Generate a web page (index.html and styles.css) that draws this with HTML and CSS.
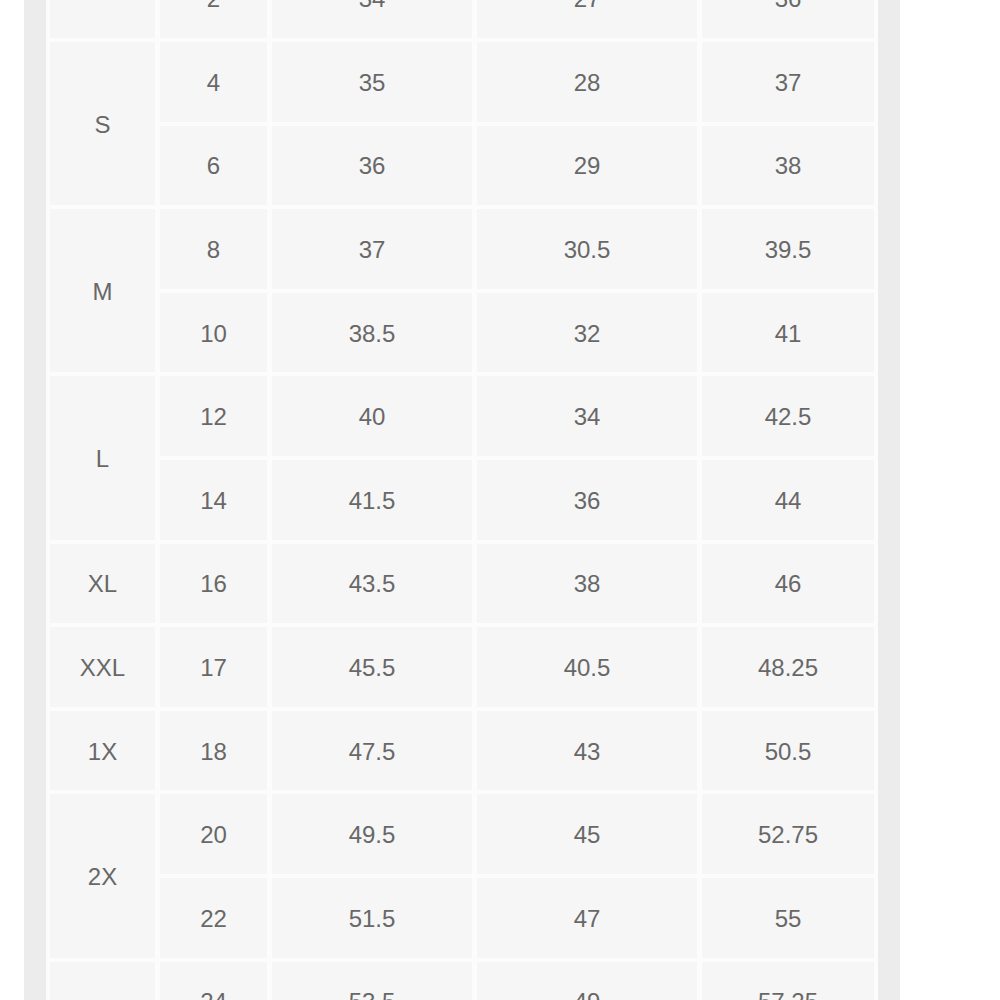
FILE: index.html
```html
<!DOCTYPE html>
<html>
<head>
<meta charset="utf-8">
<link rel="stylesheet" href="styles.css">
</head>
<body>
<div class="panel">
  <div class="inner">
    <div class="chart">
      <div class="cell"></div><div class="cell">2</div><div class="cell">34</div><div class="cell">27</div><div class="cell">36</div>

      <div class="cell span2">S</div>
      <div class="cell">4</div><div class="cell">35</div><div class="cell">28</div><div class="cell">37</div>
      <div class="cell">6</div><div class="cell">36</div><div class="cell">29</div><div class="cell">38</div>

      <div class="cell span2">M</div>
      <div class="cell">8</div><div class="cell">37</div><div class="cell">30.5</div><div class="cell">39.5</div>
      <div class="cell">10</div><div class="cell">38.5</div><div class="cell">32</div><div class="cell">41</div>

      <div class="cell span2">L</div>
      <div class="cell">12</div><div class="cell">40</div><div class="cell">34</div><div class="cell">42.5</div>
      <div class="cell">14</div><div class="cell">41.5</div><div class="cell">36</div><div class="cell">44</div>

      <div class="cell">XL</div><div class="cell">16</div><div class="cell">43.5</div><div class="cell">38</div><div class="cell">46</div>
      <div class="cell">XXL</div><div class="cell">17</div><div class="cell">45.5</div><div class="cell">40.5</div><div class="cell">48.25</div>
      <div class="cell">1X</div><div class="cell">18</div><div class="cell">47.5</div><div class="cell">43</div><div class="cell">50.5</div>

      <div class="cell span2">2X</div>
      <div class="cell">20</div><div class="cell">49.5</div><div class="cell">45</div><div class="cell">52.75</div>
      <div class="cell">22</div><div class="cell">51.5</div><div class="cell">47</div><div class="cell">55</div>

      <div class="cell span2"></div>
      <div class="cell">24</div><div class="cell">53.5</div><div class="cell">49</div><div class="cell">57.25</div>
    </div>
  </div>
</div>
</body>
</html>
```
FILE: styles.css
```css
html, body {
  margin: 0;
  padding: 0;
  background: #ffffff;
  height: 1000px;
  overflow: hidden;
}

.panel {
  margin-left: 24px;
  width: 876px;
  height: 1100px;
  background: #ececec;
  padding-left: 22px;
  box-sizing: border-box;
  display: flex;
}

.inner {
  width: 832px;
  background: #fcfcfc;
  padding: 0 4px;
  box-sizing: border-box;
}

.chart {
  margin-top: -41.6px;
  display: grid;
  grid-template-columns: 105px 107px 200px 220px 172px;
  grid-auto-rows: 79.6px;
  column-gap: 5px;
  row-gap: 4px;
}

.cell {
  background: #f6f6f6;
  display: flex;
  align-items: center;
  justify-content: center;
  padding-top: 2px;
  box-sizing: border-box;
  font-family: "Liberation Sans", Arial, sans-serif;
  font-size: 24px;
  color: #686868;
}

.span2 {
  grid-row: span 2;
}
```
